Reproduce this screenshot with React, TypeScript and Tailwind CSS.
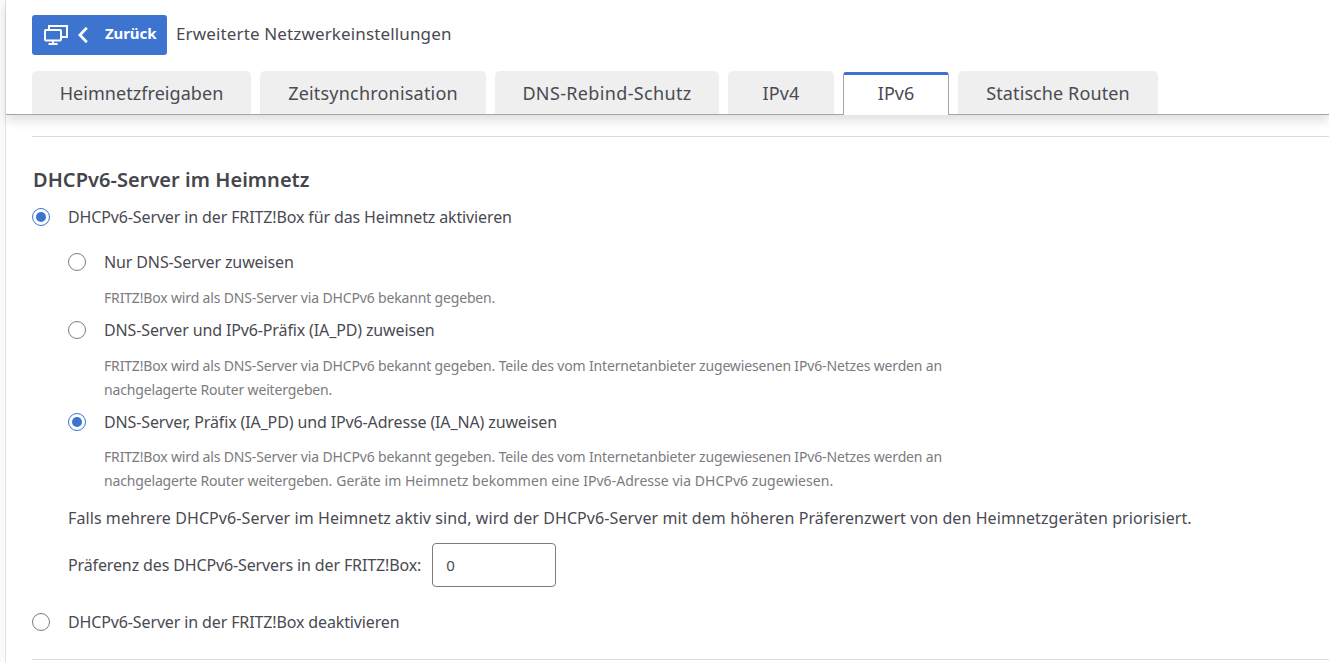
import React from 'react';

const tabs = [
  { label: 'Heimnetzfreigaben', className: 'w-[219px] tracking-[0.05px]' },
  { label: 'Zeitsynchronisation', className: 'w-[226px] tracking-[0.2px]' },
  { label: 'DNS-Rebind-Schutz', className: 'w-[224px] tracking-[0.35px]' },
  { label: 'IPv4', className: 'w-[106px] tracking-[0.1px]' },
  { label: 'IPv6', className: 'w-[106px]' },
  { label: 'Statische Routen', className: 'w-[200px] tracking-[0.1px]' },
];

const Radio: React.FC<{ checked?: boolean }> = ({ checked }) => (
  <span
    className={`flex h-[18px] w-[18px] shrink-0 items-center justify-center rounded-full border-[1.5px] bg-white ${
      checked ? 'border-[#3d74cf]' : 'border-[#7d7d7d]'
    }`}
  >
    {checked && <span className="h-[10px] w-[10px] rounded-full bg-[#3d74cf]" />}
  </span>
);

const Option: React.FC<{ checked?: boolean; label: string; className?: string }> = ({ checked, label, className = '' }) => (
  <label className={`flex h-6 items-center gap-[18px] text-[16px] tracking-[-0.13px] text-[#4a4a52] ${className}`}>
    <Radio checked={checked} />
    <span>{label}</span>
  </label>
);

const Hint: React.FC<{ children: React.ReactNode; className?: string }> = ({ children, className = '' }) => (
  <div className={`ml-[72px] w-[860px] text-[14px] leading-6 tracking-[-0.16px] text-[#7b7b80] ${className}`}>{children}</div>
);

export default function App() {
  return (
    <div className="flex h-[662px] w-full overflow-hidden bg-white font-['Noto_Sans',sans-serif]">
      <div className="w-[6px] shrink-0 border-r border-[#e2e2e2] bg-[#fafafa]" />
      <div className="min-w-0 flex-1">
        <header className="h-[115px] border-b border-[#a3a5a8] pl-[26px] pt-[15px] shadow-[0_6px_10px_rgba(0,0,0,0.12)]">
          <div className="flex items-center gap-[9px]">
            <button className="flex h-10 w-[135px] items-center rounded-[3px] bg-[#3d74cf] pl-[12px] text-white">
              <svg viewBox="0 0 24 20" className="h-5 w-6" fill="none" stroke="currentColor" strokeWidth="2">
                <path d="M5 4.5V1h18v11h-5.5" />
                <rect x="1" y="5" width="16" height="10.4" rx="0.8" />
                <path d="M9 15.5v3M4.5 19h9" />
              </svg>
              <svg viewBox="0 0 10 16" className="ml-[10px] h-4 w-[10px]" fill="none" stroke="currentColor" strokeWidth="2.8">
                <path d="M8.8 .8 1.9 8l6.9 7.2" />
              </svg>
              <span className="ml-[17px] pb-[3px] text-[15px] font-bold tracking-[-0.1px]">Zurück</span>
            </button>
            <span className="pb-[2px] text-[17px] tracking-[0.14px] text-[#4a4a52]">Erweiterte Netzwerkeinstellungen</span>
          </div>
          <nav className="mt-4 flex gap-[9px]">
            {tabs.map((tab) =>
              tab.label === 'IPv6' ? (
                <div
                  key={tab.label}
                  className={`mt-px flex h-[43px] items-center justify-center rounded-t-[3px] border-x border-t-[3px] border-x-[#a3a5a8] border-t-[#3d74cf] bg-white pb-[4px] text-[18px] text-[#4a4a52] ${tab.className}`}
                >
                  {tab.label}
                </div>
              ) : (
                <div
                  key={tab.label}
                  className={`flex h-[43px] items-center justify-center rounded-t-[5px] bg-[#efefef] pt-px text-[18px] text-[#4a4a52] ${tab.className}`}
                >
                  {tab.label}
                </div>
              )
            )}
          </nav>
        </header>

        <main className="pl-[26px]">
          <div className="mt-[21px] border-t border-[#dcdcdc]" />
          <h2 className="ml-px mt-[29px] text-[20px] font-semibold leading-[28px] tracking-[0.04px] text-[#45454c]">DHCPv6-Server im Heimnetz</h2>
          <Option checked label="DHCPv6-Server in der FRITZ!Box für das Heimnetz aktivieren" className="mt-[11px]" />

          <div className="ml-[36px] mt-[21px]">
            <Option label="Nur DNS-Server zuweisen" />
          </div>
          <Hint className="mt-[12px]">FRITZ!Box wird als DNS-Server via DHCPv6 bekannt gegeben.</Hint>
          <div className="ml-[36px] mt-[8px]">
            <Option label="DNS-Server und IPv6-Präfix (IA_PD) zuweisen" />
          </div>
          <Hint className="mt-[12px]">
            FRITZ!Box wird als DNS-Server via DHCPv6 bekannt gegeben. Teile des vom Internetanbieter zugewiesenen IPv6-Netzes werden an nachgelagerte Router weitergeben.
          </Hint>
          <div className="ml-[36px] mt-[8px]">
            <Option checked label="DNS-Server, Präfix (IA_PD) und IPv6-Adresse (IA_NA) zuweisen" />
          </div>
          <Hint className="mt-[11px]">
            <div>FRITZ!Box wird als DNS-Server via DHCPv6 bekannt gegeben. Teile des vom Internetanbieter zugewiesenen IPv6-Netzes werden an</div>
            <div className="flex gap-[4px]">
              <span>nachgelagerte Router weitergeben.</span>
              <span className="tracking-[0.04px]">Geräte im Heimnetz bekommen eine IPv6-Adresse via DHCPv6 zugewiesen.</span>
            </div>
          </Hint>
          <p className="ml-[36px] mt-[13px] text-[16px] leading-6 tracking-[0.085px] text-[#4a4a52]">
            Falls mehrere DHCPv6-Server im Heimnetz aktiv sind, wird der DHCPv6-Server mit dem höheren Präferenzwert von den Heimnetzgeräten priorisiert.
          </p>
          <div className="ml-[36px] mt-[13px] flex items-center gap-[11px] text-[16px] tracking-[-0.13px] text-[#4a4a52]">
            <span>Präferenz des DHCPv6-Servers in der FRITZ!Box:</span>
            <input
              readOnly
              value="0"
              className="h-[44px] w-[124px] rounded-[4px] border border-[#7d7d7d] px-[13px] text-[15px] text-[#4a4a52]"
            />
          </div>
          <Option label="DHCPv6-Server in der FRITZ!Box deaktivieren" className="mt-[23px]" />
          <div className="mt-[25px] border-t border-[#dcdcdc]" />
        </main>
      </div>
    </div>
  );
}
